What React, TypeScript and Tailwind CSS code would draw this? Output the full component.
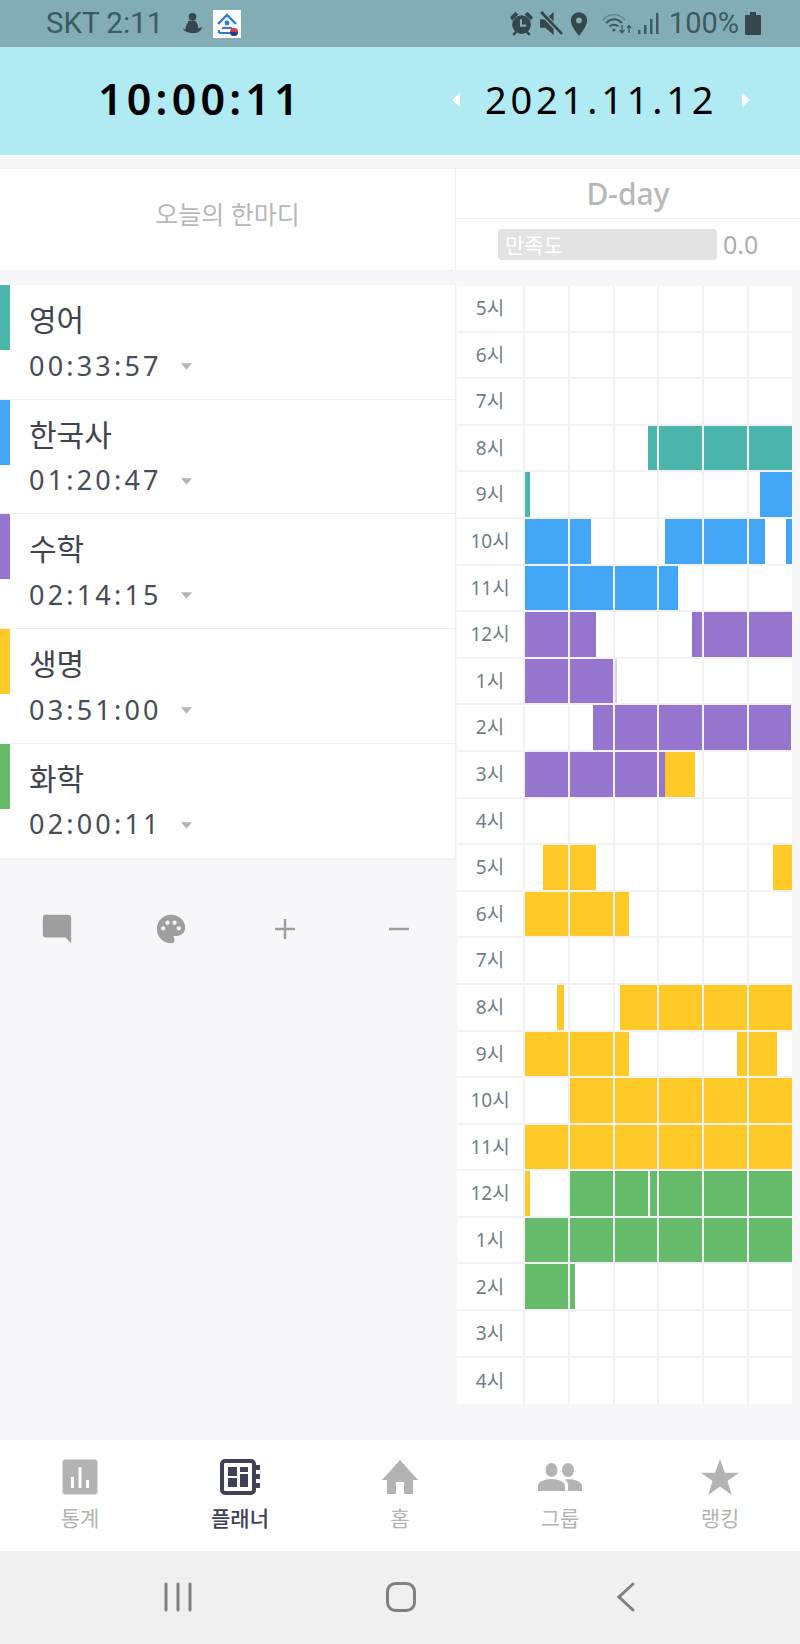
import { MdChatBubble, MdPalette, MdPlace } from "react-icons/md";

const TEAL = "#4db6ac";
const BLUE = "#42a5f5";
const PURPLE = "#9575cd";
const LILAC = "#dccfef";
const YELLOW = "#ffca28";
const GREEN = "#66bb6a";

const KR = "font-['Noto_Sans','Noto_Sans_CJK_KR',sans-serif]";

const subjects = [
  { name: "영어", time: "00:33:57", color: "bg-[#4db6ac]" },
  { name: "한국사", time: "01:20:47", color: "bg-[#42a5f5]" },
  { name: "수학", time: "02:14:15", color: "bg-[#9575cd]" },
  { name: "생명", time: "03:51:00", color: "bg-[#ffca28]" },
  { name: "화학", time: "02:00:11", color: "bg-[#66bb6a]" },
];

type Seg = [number, number, string];

// start and end are in cell units, 0 to 6
const rows: { label: number; segs: Seg[] }[] = [
  { label: 5, segs: [] },
  { label: 6, segs: [] },
  { label: 7, segs: [] },
  { label: 8, segs: [[2.77, 6, TEAL]] },
  { label: 9, segs: [[0, 0.11, TEAL], [5.25, 6, BLUE]] },
  { label: 10, segs: [[0, 1.49, BLUE], [3.13, 5.37, BLUE], [5.87, 6, BLUE]] },
  { label: 11, segs: [[0, 3.43, BLUE]] },
  { label: 12, segs: [[0, 1.6, PURPLE], [3.76, 6, PURPLE]] },
  { label: 1, segs: [[0, 2, PURPLE], [2, 2.06, LILAC]] },
  { label: 2, segs: [[1.55, 5.98, PURPLE]] },
  { label: 3, segs: [[0, 3.12, PURPLE], [3.12, 3.83, YELLOW]] },
  { label: 4, segs: [] },
  { label: 5, segs: [[0.41, 1.61, YELLOW], [5.55, 6, YELLOW]] },
  { label: 6, segs: [[0, 2.34, YELLOW]] },
  { label: 7, segs: [] },
  { label: 8, segs: [[0.75, 0.9, YELLOW], [2.12, 6, YELLOW]] },
  { label: 9, segs: [[0, 2.34, YELLOW], [4.76, 5.65, YELLOW]] },
  { label: 10, segs: [[1, 6, YELLOW]] },
  { label: 11, segs: [[0, 6, YELLOW]] },
  { label: 12, segs: [[0, 0.11, YELLOW], [1, 2.78, GREEN], [2.83, 6, GREEN]] },
  { label: 1, segs: [[0, 6, GREEN]] },
  { label: 2, segs: [[0, 1.11, GREEN]] },
  { label: 3, segs: [] },
  { label: 4, segs: [] },
];

function cellFills(segs: Seg[], cell: number) {
  return segs
    .map(([a, b, color]) => ({ from: Math.max(a, cell), to: Math.min(b, cell + 1), color }))
    .filter((s) => s.to > s.from);
}

function StatusBar() {
  return (
    <div className="h-[47px] bg-[#83adb5] flex items-center pl-[46px] text-[#3d5a60] font-['Roboto',sans-serif] shrink-0">
      <span className="text-[29.5px] leading-none">SKT 2:11</span>
      <svg viewBox="0 0 24 24" className="w-[23px] h-[23px] ml-[18px]" fill="#33474c">
        <circle cx="12" cy="5" r="4" />
        <path d="M8 9h7c2 3 3 5 3 8 2-.4 3-1 4-2-.4 4-3.500 7-9 7-6 0-10-2-11-5 1 .6 2 1 3 1-1-3 2-6 3-9z" />
      </svg>
      <div className="w-[28px] h-[28px] ml-[9px] bg-white flex items-center justify-center">
        <svg viewBox="0 0 28 28" className="w-[28px] h-[28px]" fill="none">
          <path d="M5 14 L14 5 L23 14" stroke="#2a7fd5" strokeWidth="2.4" />
          <circle cx="14" cy="13" r="2.4" fill="#2a7fd5" />
          <path d="M9 18h10M6 23V20M6 23h12" stroke="#2a7fd5" strokeWidth="2.2" />
          <circle cx="21" cy="22" r="4" fill="#d63a3a" />
          <path d="M17 22a4 4 0 0 0 8 0z" fill="#1c3f8f" />
        </svg>
      </div>
      <div className="ml-auto flex items-center pr-[39px]">
        <svg viewBox="0 0 24 24" className="w-[25px] h-[25px]">
          <path d="M1 6l5-5 3 2-6 6zM23 6l-5-5-3 2 6 6z" fill="#33474c" />
          <circle cx="12" cy="13" r="9" fill="#33474c" />
          <path d="M4 23l3-3M20 23l-3-3" stroke="#33474c" strokeWidth="2.400" />
          <path d="M11.500 8v6h5" fill="none" stroke="#83adb5" strokeWidth="2" />
        </svg>
        <svg viewBox="0 0 24 24" className="w-[25px] h-[25px] ml-[4px]">
          <path d="M2 8h5l8-7v22l-8-7H2z" fill="#33474c" />
          <path d="M3 1l20 21" stroke="#83adb5" strokeWidth="5" />
          <path d="M3 1l20 21" stroke="#33474c" strokeWidth="2.600" />
        </svg>
        <MdPlace className="w-[28px] h-[28px] ml-[2px]" color="#33474c" />
        <svg viewBox="0 0 30 24" className="w-[30px] h-[24px] ml-[9px]" fill="none" stroke="#3d5a60">
          <path d="M1 8C7 1 17 1 23 8" strokeWidth="1.2" opacity="0.6" />
          <path d="M4 11C9 6 15 6 20 11" strokeWidth="2" />
          <path d="M7.500 14.500C10 12 14 12 16.500 14.500" strokeWidth="2" />
          <circle cx="12" cy="18" r="1.600" fill="#3d5a60" stroke="none" />
          <path d="M20 13v8M17.500 18l2.500 3 2.500-3M27 21v-7M25 16l2-2.500 2 2.500" strokeWidth="1.4" />
        </svg>
        <svg viewBox="0 0 22 24" className="w-[22px] h-[24px] ml-[5px]" fill="#3d5a60">
          <rect x="1" y="18" width="2.500" height="4" />
          <rect x="7" y="13" width="2.500" height="9" />
          <rect x="13" y="7" width="2.500" height="15" />
          <rect x="19" y="1" width="2.500" height="21" />
        </svg>
        <span className="text-[29px] leading-none ml-[10px]">100%</span>
        <svg viewBox="0 0 16 23" className="w-[16px] h-[23px] ml-[6px]" fill="#33474c">
          <path d="M5 0h6v3h4a1 1 0 0 1 1 1v18a1 1 0 0 1-1 1H1a1 1 0 0 1-1-1V4a1 1 0 0 1 1-1h4z" />
        </svg>
      </div>
    </div>
  );
}

function Header() {
  return (
    <div className="h-[108px] bg-[#b0ebf3] flex items-center shrink-0 font-['Noto_Sans',sans-serif] text-black">
      <div className="w-[456px] pl-[98px] pb-[5px] text-[43px] leading-none font-semibold tracking-[4.2px]">10:00:11</div>
      <div className="flex items-center pb-[4px]">
        <svg viewBox="0 0 8 14" className="w-[8px] h-[14px] -ml-[4px] mt-[2px]" fill="#ffffff">
          <path d="M8 0v14L0 7z" />
        </svg>
        <span className="ml-[25px] text-[38px] leading-none tracking-[3.8px]">2021.11.12</span>
        <svg viewBox="0 0 8 14" className="w-[8px] h-[14px] ml-[25px] mt-[2px]" fill="#ffffff">
          <path d="M0 0v14l8-7z" />
        </svg>
      </div>
    </div>
  );
}

function InfoRow() {
  return (
    <div className="mt-[13px] h-[103px] bg-white flex shrink-0 border-y border-[#f2f2f5]">
      <div className={`w-[456px] flex items-center justify-center pb-[10px] border-r border-[#f0f0f3] text-[25px] text-[#b8b8b8] ${KR}`}>
        오늘의 한마디
      </div>
      <div className="flex-1 flex flex-col">
        <div className="h-[50px] border-b border-[#f0f0f3] flex items-center justify-center font-['Noto_Sans',sans-serif] text-[30px] font-medium text-[#b8b8b8]">
          D-day
        </div>
        <div className="flex-1 flex items-center pl-[42px]">
          <div className={`w-[219px] h-[31px] rounded-[4px] bg-[#e3e3e3] flex items-center pl-[7px] pt-[3px] text-[21px] text-white ${KR}`}>
            만족도
          </div>
          <span className="ml-[6px] text-[25px] text-[#aeaeae] font-['Noto_Sans',sans-serif]">0.0</span>
        </div>
      </div>
    </div>
  );
}

function SubjectList() {
  return (
    <div className="bg-white border-r border-[#f0f0f3] border-b-2 border-b-[#f0f0f3]">
      {subjects.map((s) => (
        <div key={s.name} className="h-[114.7px] flex border-b border-[#eeeef0] last:border-b-0">
          <div className={`w-[10px] h-[65px] shrink-0 ${s.color}`} />
          <div className="pl-[19px] pt-[15px]">
            <div className={`h-[40px] text-[30px] leading-[40px] text-[#3f444f] ${KR}`}>{s.name}</div>
            <div className="mt-[5px] flex items-center h-[40px] font-['Noto_Sans',sans-serif] text-[#484c56] text-[27px] leading-none tracking-[3.2px]">
              {s.time}
              <svg viewBox="0 0 10 6" className="w-[11px] h-[7px] ml-[19px] mt-[3px]" fill="#b5b5b5">
                <path d="M0 0h10L5 6z" />
              </svg>
            </div>
          </div>
        </div>
      ))}
    </div>
  );
}

function Toolbar() {
  return (
    <div className="grid grid-cols-4 pt-[52px] text-[#9e9e9e]">
      <div className="flex justify-center">
        <MdChatBubble className="w-[34px] h-[34px] -scale-x-100" />
      </div>
      <div className="flex justify-center">
        <MdPalette className="w-[34px] h-[34px]" />
      </div>
      <div className="flex justify-center items-center h-[34px]">
        <svg viewBox="0 0 20 20" className="w-[20px] h-[20px]" stroke="#9e9e9e" strokeWidth="2.5">
          <path d="M0 10h20M10 0v20" />
        </svg>
      </div>
      <div className="flex justify-center items-center h-[34px]">
        <svg viewBox="0 0 20 20" className="w-[20px] h-[20px]" stroke="#9e9e9e" strokeWidth="2.5">
          <path d="M0 10h20" />
        </svg>
      </div>
    </div>
  );
}

function Timetable() {
  return (
    <div className="w-[335px] ml-[1px] mt-[1px] self-start bg-white">
      {rows.map((row, i) => (
        <div key={i} className="h-[46.6px] flex border-b-2 border-[#f2f2f5] last:border-b-0">
          <div className={`w-[66px] shrink-0 flex items-center justify-center text-[19px] text-[#6f7f86] ${KR}`}>
            {row.label}시
          </div>
          {[0, 1, 2, 3, 4, 5].map((cell) => (
            <div key={cell} className="flex-1 border-l-2 border-[#f2f2f5] relative">
              {cellFills(row.segs, cell).map((f, k) => (
                <div
                  key={k}
                  className="absolute top-0 bottom-0"
                  style={{
                    left: `${(f.from - cell) * 100}%`,
                    width: `${(f.to - f.from) * 100}%`,
                    backgroundColor: f.color,
                  }}
                />
              ))}
            </div>
          ))}
        </div>
      ))}
    </div>
  );
}

const navItems = ["통계", "플래너", "홈", "그룹", "랭킹"];

function NavIcon({ index }: { index: number }) {
  if (index === 0) {
    return (
      <svg viewBox="0 0 36 36" className="w-[36px] h-[36px]">
        <rect x="0.500" y="0.500" width="35" height="35" rx="3" fill="#b3b3b3" />
        <path d="M9 18h3v11H9zM16.500 8h3v21h-3zM24 21h3v8h-3z" fill="#ffffff" />
      </svg>
    );
  }
  if (index === 1) {
    return (
      <svg viewBox="0 0 40 36" className="w-[40px] h-[36px]">
        <rect x="2" y="2" width="32" height="32" rx="3" fill="none" stroke="#3f4254" strokeWidth="4" />
        <path d="M8 8h9v9H8zM20 8h8v5h-8zM20 15h8v13h-8zM8 19h9v9H8z" fill="#3f4254" />
        <path d="M36 6h4v5h-4zM36 15h4v5h-4zM36 24h4v5h-4z" fill="#3f4254" />
      </svg>
    );
  }
  if (index === 2) {
    return (
      <svg viewBox="0 0 36 34" className="w-[36px] h-[34px]" fill="#b3b3b3">
        <path d="M18 0L36 20h-5v14h-9V22h-8v12H5V20H0z" />
      </svg>
    );
  }
  if (index === 3) {
    return (
      <svg viewBox="0 0 44 28" className="w-[44px] h-[28px]" fill="#b3b3b3">
        <ellipse cx="13.500" cy="7" rx="6" ry="7" />
        <ellipse cx="30" cy="7" rx="6" ry="7" />
        <path d="M0 28v-5c0-4 6-7 13.500-7S27 19 27 23v5zM30 28v-6c0-2-1-4-3-5.500 1-.3 2-.5 3-.5 7 0 14 3 14 7v5z" />
      </svg>
    );
  }
  return (
    <svg viewBox="0 0 38 36" className="w-[38px] h-[36px]" fill="#b3b3b3">
      <path d="M19 0l4.800 13.700H38L26.500 22 30.700 36 19 27.500 7.300 36 11.500 22 0 13.700h14.200z" />
    </svg>
  );
}

function BottomNav() {
  return (
    <div className="h-[111px] bg-white grid grid-cols-5 shrink-0">
      {navItems.map((label, i) => (
        <div key={label} className="flex flex-col items-center">
          <div className="h-[36px] mt-[19px] flex items-center justify-center">
            <NavIcon index={i} />
          </div>
          <span className={`mt-[9px] text-[21px] leading-[28px] ${KR} ${i === 1 ? "text-[#3f4254] font-medium" : "text-[#b3b3b3]"}`}>
            {label}
          </span>
        </div>
      ))}
    </div>
  );
}

function SystemBar() {
  return (
    <div className="h-[93px] bg-[#f0f0f0] grid grid-cols-3 items-center shrink-0 pb-[2px] pl-[66px] pr-[62px]">
      <div className="flex justify-center">
        <svg viewBox="0 0 28 30" className="w-[28px] h-[30px]" stroke="#808080" strokeWidth="3" strokeLinecap="round">
          <path d="M2 2v26M14 2v26M26 2v26" />
        </svg>
      </div>
      <div className="flex justify-center">
        <svg viewBox="0 0 30 30" className="w-[30px] h-[30px] -ml-[2px]" fill="none" stroke="#808080" strokeWidth="3">
          <rect x="1.500" y="1.500" width="27" height="27" rx="8" />
        </svg>
      </div>
      <div className="flex justify-center">
        <svg viewBox="0 0 18 30" className="w-[18px] h-[30px]" fill="none" stroke="#808080" strokeWidth="3" strokeLinecap="round">
          <path d="M16 2L2 15l14 13" />
        </svg>
      </div>
    </div>
  );
}

export default function App() {
  return (
    <div className="w-[800px] h-[1644px] bg-[#f7f7f9] flex flex-col overflow-hidden">
      <StatusBar />
      <Header />
      <InfoRow />
      <div className="flex-1 flex pt-[14px]">
        <div className="w-[456px] shrink-0">
          <SubjectList />
          <Toolbar />
        </div>
        <Timetable />
      </div>
      <BottomNav />
      <SystemBar />
    </div>
  );
}
